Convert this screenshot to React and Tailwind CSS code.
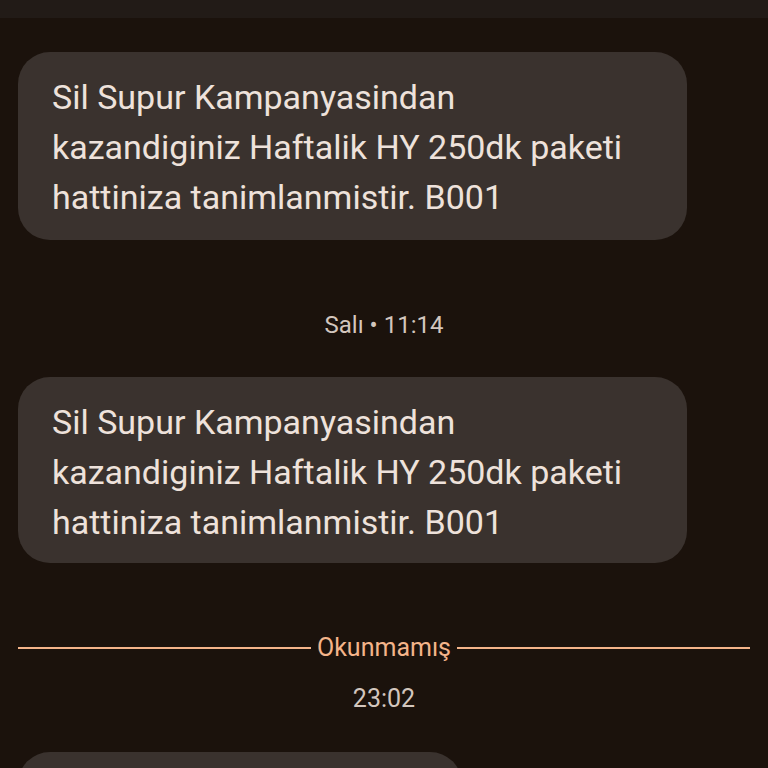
export default function App() {
  const msg = (
    <>
      Sil Supur Kampanyasindan
      <br />
      kazandiginiz Haftalik HY 250dk paketi
      <br />
      hattiniza tanimlanmistir. B001
    </>
  );
  return (
    <div
      className="w-[768px] h-[768px] overflow-hidden bg-[#1b120c] flex flex-col"
      style={{ fontFamily: "Roboto, 'Noto Sans', sans-serif" }}
    >
      <div className="h-[18px] shrink-0 bg-[#221b17]" />
      <div className="mt-[34px] ml-[18px] w-[669px] shrink-0 rounded-[32px] bg-[#3a322e] pl-[34px] pt-[20px] pb-[18px] text-[34px] leading-[50px] text-[#eee2db]">
        {msg}
      </div>
      <div className="mt-[70px] h-[30px] shrink-0 text-center text-[24px] leading-[30px] text-[#d3c6be]">
        Salı • 11:14
      </div>
      <div className="mt-[37px] ml-[18px] w-[669px] shrink-0 rounded-[32px] bg-[#3a322e] pl-[34px] pt-[20px] pb-[16px] text-[34px] leading-[50px] text-[#eee2db]">
        {msg}
      </div>
      <div className="mt-[70px] mx-[18px] h-[30px] shrink-0 flex items-center gap-[6px]">
        <div className="flex-1 h-[2px] bg-[#f4b48a]" />
        <span className="text-[25px] leading-[30px] text-[#f4b48a]">Okunmamış</span>
        <div className="flex-1 h-[2px] bg-[#f4b48a]" />
      </div>
      <div className="mt-[21px] h-[30px] shrink-0 text-center text-[25px] leading-[30px] text-[#d3c6be]">
        23:02
      </div>
      <div className="mt-[38px] ml-[18px] w-[444px] h-[100px] shrink-0 rounded-[32px] bg-[#3a322e]" />
    </div>
  );
}
